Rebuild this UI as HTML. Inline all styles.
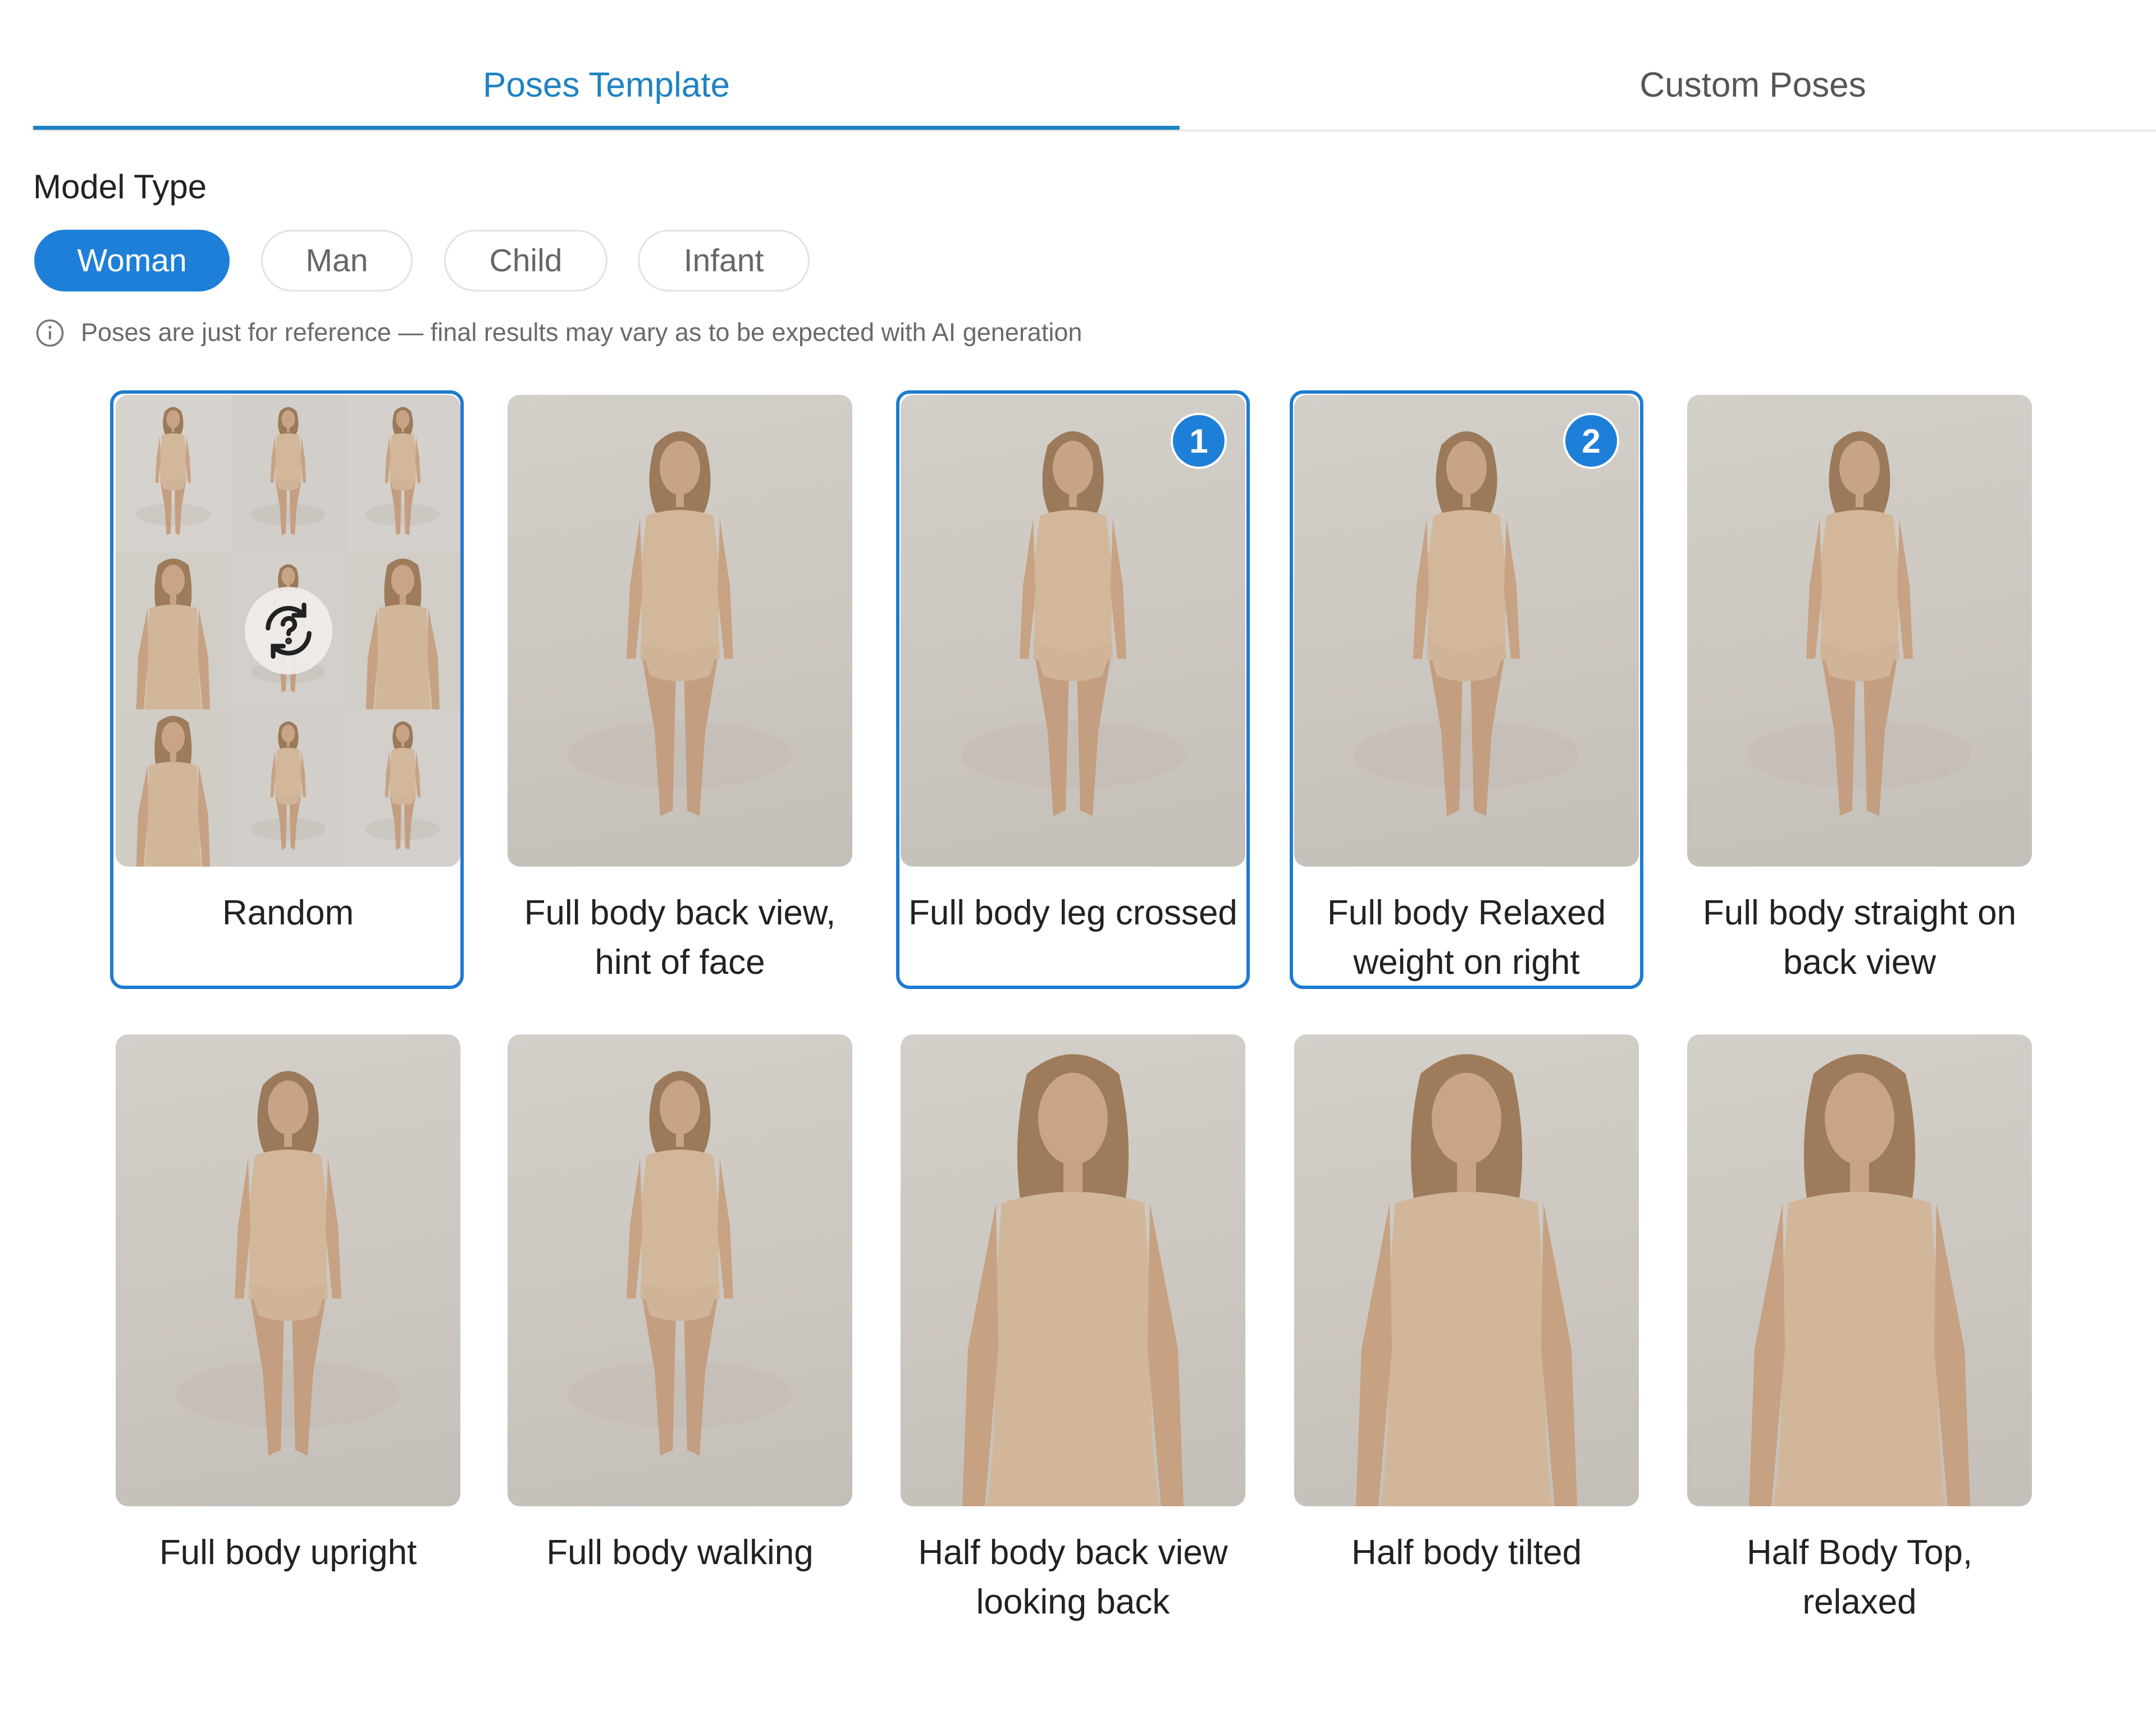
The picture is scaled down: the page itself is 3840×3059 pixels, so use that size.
<!DOCTYPE html>
<html><head><meta charset="utf-8">
<style>
*{margin:0;padding:0;box-sizing:border-box}
body{width:3840px;height:3059px;background:#fff;position:relative;overflow:hidden;font-family:"Liberation Sans",Arial,sans-serif;color:#222}
.abs{position:absolute}
.tab{position:absolute;top:116px;font-size:62px;text-align:center}
.pill{position:absolute;top:409px;height:110px;border-radius:55px;border:3px solid #e2e2e2;font-size:57px;color:#666;display:flex;align-items:center;justify-content:center}
.img{position:absolute;width:614px;height:840px;border-radius:22px;overflow:hidden;background:linear-gradient(170deg,#d3cfc9 0%,#cbc6bf 60%,#c4bfb8 100%)}
.img svg{position:absolute;left:0;top:0;width:100%;height:100%}
.lbl{position:absolute;width:700px;text-align:center;font-size:62px;line-height:88px;color:#222}
.sel{position:absolute;border:6px solid #1f7bd0;border-radius:24px;width:630px;height:1066px;top:695px}
.badge{position:absolute;width:100px;height:100px;border-radius:50%;background:#1e7fd8;color:#fff;font-size:60px;font-weight:bold;display:flex;align-items:center;justify-content:center;border:4px solid #fff}
</style></head><body>
<svg width="0" height="0" style="position:absolute">
<defs>
<symbol id="full" viewBox="0 0 614 840">
<ellipse cx="307" cy="640" rx="200" ry="60" fill="#c0bab2" opacity=".4"/>
<path d="M262 90 Q307 40 352 90 Q372 160 350 210 L264 210 Q242 160 262 90Z" fill="#9a7a5a"/>
<ellipse cx="307" cy="130" rx="36" ry="48" fill="#c9a385"/>
<path d="M300 170 h14 v30 h-14Z" fill="#c9a385"/>
<path d="M248 215 Q307 195 366 215 L380 330 Q372 400 378 470 L290 470 L236 470 Q242 400 234 330Z" fill="#d2b79a"/>
<path d="M236 220 L218 340 L212 470 L228 470 L240 350Z M378 220 L396 340 L402 470 L386 470 L374 350Z" fill="#c7a283"/>
<path d="M240 470 L300 490 L294 740 L272 750 L262 600Z M374 470 L314 490 L320 740 L342 750 L352 600Z" fill="#c49e80"/>
<path d="M236 440 Q307 470 378 440 L360 500 Q307 520 254 500Z" fill="#d0b498"/>
</symbol>
<symbol id="half" viewBox="0 0 614 840">
<path d="M225 70 Q307 0 389 70 Q420 200 395 330 L219 330 Q194 200 225 70Z" fill="#9e7c5b"/>
<ellipse cx="307" cy="150" rx="62" ry="82" fill="#caa486"/>
<path d="M290 220 h34 v60 h-34Z" fill="#c9a385"/>
<path d="M180 300 Q307 260 434 300 L450 520 Q440 700 460 840 L154 840 Q174 700 164 520Z" fill="#d1b699"/>
<path d="M170 300 L120 560 L110 840 L150 840 L174 560Z M444 300 L494 560 L504 840 L464 840 L440 560Z" fill="#c6a182"/>
</symbol>
</defs></svg>

<div class="tab" style="left:659px;width:842px;color:#1f82c2">Poses Template</div>
<div class="tab" style="left:2701px;width:842px;color:#555">Custom Poses</div>
<div class="abs" style="left:59px;top:231px;width:3781px;height:3px;background:#e4e4e4"></div>
<div class="abs" style="left:59px;top:224px;width:2042px;height:7px;background:#1f82c2"></div>

<div class="abs" style="left:59px;top:298px;font-size:60px;color:#222">Model Type</div>
<div class="pill" style="left:61px;width:348px;background:#1e7fd8;border-color:#1e7fd8;color:#fff">Woman</div>
<div class="pill" style="left:465px;width:270px">Man</div>
<div class="pill" style="left:791px;width:291px">Child</div>
<div class="pill" style="left:1136px;width:306px">Infant</div>

<svg class="abs" style="left:62px;top:566px" width="54" height="54" viewBox="0 0 24 24"><circle cx="12" cy="12" r="10" fill="none" stroke="#777" stroke-width="1.6"/><line x1="12" y1="10.5" x2="12" y2="17" stroke="#777" stroke-width="1.8"/><circle cx="12" cy="7.3" r="1.2" fill="#777"/></svg>
<div class="abs" style="left:144px;top:566px;font-size:45px;color:#6a6a6a">Poses are just for reference — final results may vary as to be expected with AI generation</div>

<div class="sel" style="left:196px"></div>
<div class="sel" style="left:1596px"></div>
<div class="sel" style="left:2297px"></div>

<div class="img" style="left:206px;top:703px">
 <div style="position:absolute;inset:0;display:grid;grid-template-columns:1fr 1fr 1fr;grid-template-rows:1fr 1fr 1fr">
  <div style="background:#d6d2cd;position:relative"><svg style="width:100%;height:100%"><use href="#full"/></svg></div>
  <div style="background:#d2cec9;position:relative"><svg style="width:100%;height:100%"><use href="#full"/></svg></div>
  <div style="background:#d4d0cb;position:relative"><svg style="width:100%;height:100%"><use href="#full"/></svg></div>
  <div style="background:#d1cdc7;position:relative"><svg style="width:100%;height:100%"><use href="#half"/></svg></div>
  <div style="background:#d3cfca;position:relative"><svg style="width:100%;height:100%"><use href="#full"/></svg></div>
  <div style="background:#d1cdc7;position:relative"><svg style="width:100%;height:100%"><use href="#half"/></svg></div>
  <div style="background:#d0ccc6;position:relative"><svg style="width:100%;height:100%"><use href="#half"/></svg></div>
  <div style="background:#d2cec9;position:relative"><svg style="width:100%;height:100%"><use href="#full"/></svg></div>
  <div style="background:#d3cfca;position:relative"><svg style="width:100%;height:100%"><use href="#full"/></svg></div>
 </div>
 <div style="position:absolute;left:230px;top:342px;width:156px;height:156px;border-radius:50%;background:rgba(240,238,236,.92)"></div>
 <svg style="position:absolute;left:253px;top:365px;width:110px;height:110px" viewBox="0 0 24 24" fill="none" stroke="#222" stroke-width="1.8" stroke-linecap="round"><path d="M4 11a8 8 0 0 1 14-5"/><path d="M18 2v4h-4"/><path d="M20 13a8 8 0 0 1-14 5"/><path d="M6 22v-4h4"/><path d="M9.8 9.5a2.3 2.3 0 1 1 3 2.2c-.6.3-.8.8-.8 1.5"/><circle cx="12" cy="16" r=".4" fill="#222"/></svg>
</div>
<div class="img" style="left:904px;top:703px"><svg><use href="#full"/></svg></div>
<div class="img" style="left:1604px;top:703px"><svg><use href="#full"/></svg></div>
<div class="img" style="left:2305px;top:703px"><svg><use href="#full"/></svg></div>
<div class="img" style="left:3005px;top:703px"><svg><use href="#full"/></svg></div>
<div class="badge" style="left:2085px;top:735px">1</div>
<div class="badge" style="left:2784px;top:735px">2</div>

<div class="lbl" style="left:163px;top:1582px">Random</div>
<div class="lbl" style="left:861px;top:1582px">Full body back view,<br>hint of face</div>
<div class="lbl" style="left:1561px;top:1582px">Full body leg crossed</div>
<div class="lbl" style="left:2262px;top:1582px">Full body Relaxed<br>weight on right</div>
<div class="lbl" style="left:2962px;top:1582px">Full body straight on<br>back view</div>

<div class="img" style="left:206px;top:1842px"><svg><use href="#full"/></svg></div>
<div class="img" style="left:904px;top:1842px"><svg><use href="#full"/></svg></div>
<div class="img" style="left:1604px;top:1842px"><svg><use href="#half"/></svg></div>
<div class="img" style="left:2305px;top:1842px"><svg><use href="#half"/></svg></div>
<div class="img" style="left:3005px;top:1842px"><svg><use href="#half"/></svg></div>

<div class="lbl" style="left:163px;top:2721px">Full body upright</div>
<div class="lbl" style="left:861px;top:2721px">Full body walking</div>
<div class="lbl" style="left:1561px;top:2721px">Half body back view<br>looking back</div>
<div class="lbl" style="left:2262px;top:2721px">Half body tilted</div>
<div class="lbl" style="left:2962px;top:2721px">Half Body Top,<br>relaxed</div>
</body></html>
